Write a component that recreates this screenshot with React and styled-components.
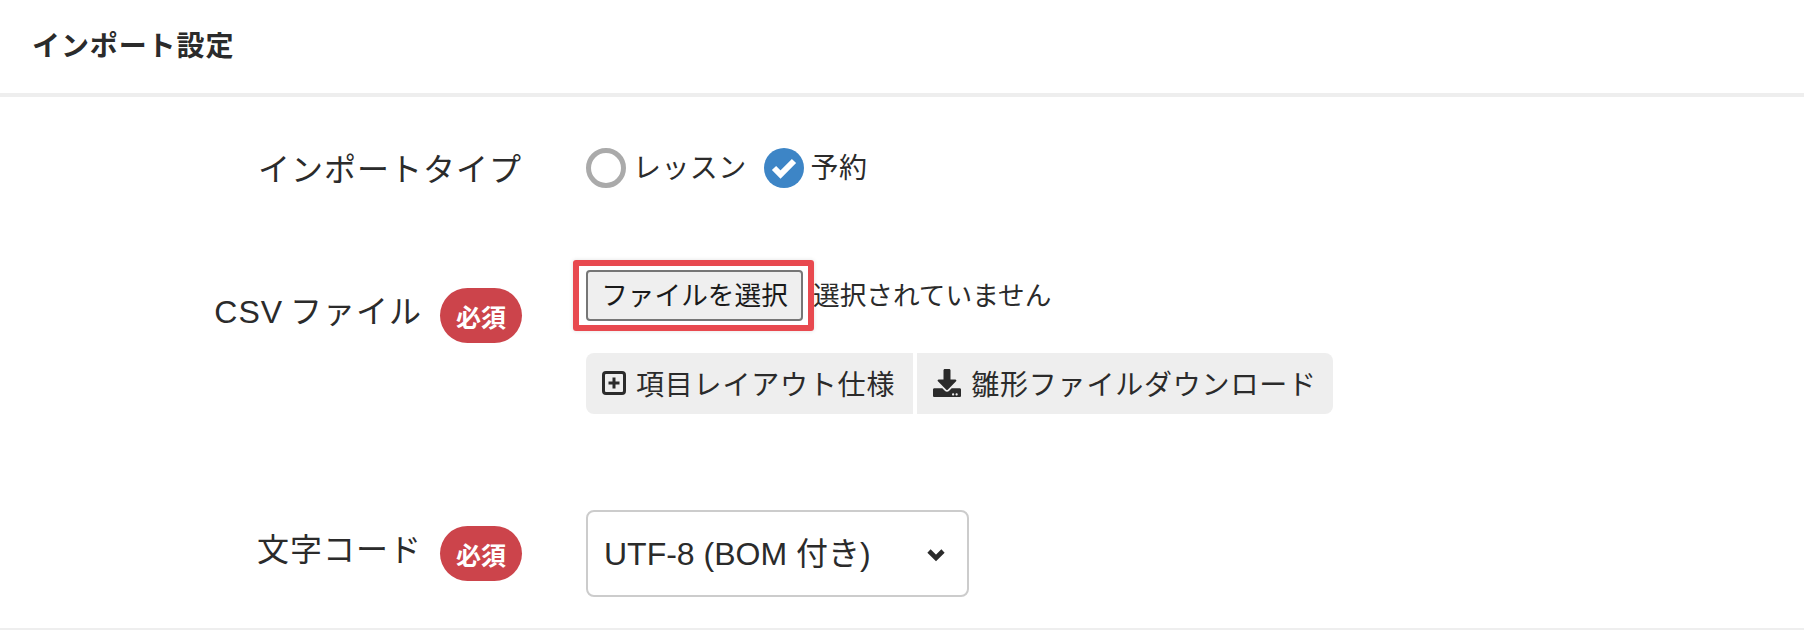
import React from "react";
import styled, { createGlobalStyle } from "styled-components";
import { FaDownload } from "react-icons/fa";

const GlobalStyle = createGlobalStyle`
  html, body {
    margin: 0;
    background: #fff;
    overflow: hidden;
  }
  body {
    font-family: "Liberation Sans", "Noto Sans CJK JP", sans-serif;
    color: #2b2b2b;
  }
`

const Page = styled.div`
  height: 630px;
  box-sizing: border-box;
  border-bottom: 2px solid #eee;
`

const SectionHeader = styled.h2`
  margin: 0;
  height: 97px;
  box-sizing: border-box;
  padding: 29px 0 0 32px;
  border-bottom: 4px solid #eee;
  font-size: 28px;
  line-height: 36px;
  font-weight: 700;
  letter-spacing: 0.9px;
`

const Form = styled.div`
  padding-top: 49px;
`

const Field = styled.div`
  display: grid;
  grid-template-columns: 522px 1fr;
  column-gap: 64px;
  align-items: ${(p) => p.$align || "center"};
  margin-bottom: ${(p) => p.$gap || 0}px;
`

const LabelCell = styled.div`
  display: flex;
  justify-content: flex-end;
  align-items: center;
  gap: 18px;
  padding-top: ${(p) => p.$top || 0}px;
`

const LabelText = styled.label`
  font-size: 32px;
  line-height: 40px;
  letter-spacing: 1px;
  word-spacing: -3px;
  padding: ${(p) => p.$pad || "0"};
`

const RequiredBadge = styled.span`
  width: 82px;
  height: 55px;
  display: flex;
  align-items: center;
  justify-content: center;
  border-radius: 28px;
  background: #cc444b;
  color: #fff;
  font-size: 25px;
  font-weight: 700;
`

const RadioGroup = styled.div`
  display: flex;
  align-items: center;
  height: 40px;
`

const RadioOption = styled.label`
  display: flex;
  align-items: center;
  gap: 7px;
  margin-right: 17px;
  font-size: 28px;
  letter-spacing: 0.4px;
`

const RadioText = styled.span`
  margin-bottom: 5px;
`

const RadioMark = styled.span`
  width: 40px;
  height: 40px;
  box-sizing: border-box;
  border-radius: 50%;
  display: flex;
  align-items: center;
  justify-content: center;
  border: ${(p) => (p.$checked ? "none" : "5px solid #aaa")};
  background: ${(p) => (p.$checked ? "#3d85c6" : "#fff")};
`

const FileRow = styled.div`
  position: relative;
  display: flex;
  align-items: center;
  width: fit-content;
  height: 51px;
  margin-bottom: 32px;
`

const FileButton = styled.button`
  width: 217px;
  height: 51px;
  box-sizing: border-box;
  padding: 0 0 4px;
  border: 2px solid #767676;
  border-radius: 4px;
  background: #efefef;
  color: #1a1a1a;
  font-family: inherit;
  font-size: 26.67px;
`

const FileName = styled.span`
  margin: 0 0 5px 10px;
  font-size: 26.67px;
`

/* annotation drawn over the file button */
const Highlight = styled.div`
  position: absolute;
  left: -13px;
  top: -10px;
  width: 241px;
  height: 71px;
  box-sizing: border-box;
  border: 6px solid #e8494f;
  border-radius: 3px;
  box-shadow: 0 0 4px rgba(0, 0, 0, 0.12);
  pointer-events: none;
`

const ButtonGroup = styled.div`
  display: flex;
  gap: 4px;
`

const GroupButton = styled.button`
  height: 61px;
  box-sizing: border-box;
  display: flex;
  align-items: center;
  gap: 10px;
  padding: 0 ${(p) => (p.$first ? 18 : 16)}px 2px 16px;
  border: none;
  background: #eee;
  color: #2b2b2b;
  font-family: inherit;
  font-size: 28px;
  letter-spacing: 0.8px;
  border-radius: ${(p) => (p.$first ? "8px 0 0 8px" : "0 8px 8px 0")};
  svg {
    flex: none;
  }
`

const SelectBox = styled.div`
  width: 383px;
  height: 87px;
  box-sizing: border-box;
  display: flex;
  align-items: center;
  justify-content: space-between;
  padding: 0 22px 6px 16px;
  border: 2px solid #ccc;
  border-radius: 8px;
  font-size: 32px;
  svg {
    margin-top: 8px;
  }
`

const CheckIcon = () => (
  <svg width="40" height="40" viewBox="0 0 40 40">
    <polyline points="10,20 16.5,26.5 30,13" fill="none" stroke="#fff" strokeWidth="6" />
  </svg>
)

const ChevronIcon = () => (
  <svg width="18" height="14" viewBox="0 0 18 14">
    <polyline points="2,3 9,10 16,3" fill="none" stroke="#2b2b2b" strokeWidth="4.6" />
  </svg>
)

const PlusBoxIcon = () => (
  <svg width="24" height="24" viewBox="0 0 24 24" fill="none" stroke="#2b2b2b" strokeWidth="3">
    <rect x="1.5" y="1.5" width="21" height="21" rx="2.5" />
    <path d="M12 6.5v11M6.5 12h11" />
  </svg>
)

export default function App() {
  return (
    <Page>
      <GlobalStyle />
      <SectionHeader>インポート設定</SectionHeader>
      <Form>
        <Field $gap={80}>
          <LabelCell>
            <LabelText $pad="4px 0 0">インポートタイプ</LabelText>
          </LabelCell>
          <RadioGroup>
            <RadioOption>
              <RadioMark />
              <RadioText>レッスン</RadioText>
            </RadioOption>
            <RadioOption>
              <RadioMark $checked>
                <CheckIcon />
              </RadioMark>
              <RadioText>予約</RadioText>
            </RadioOption>
          </RadioGroup>
        </Field>
        <Field $align="start" $gap={96}>
          <LabelCell $top={18}>
            <LabelText $pad="0 0 7px">CSV ファイル</LabelText>
            <RequiredBadge>必須</RequiredBadge>
          </LabelCell>
          <div>
            <FileRow>
              <FileButton>ファイルを選択</FileButton>
              <FileName>選択されていません</FileName>
              <Highlight />
            </FileRow>
            <ButtonGroup>
              <GroupButton $first>
                <PlusBoxIcon />
                項目レイアウト仕様
              </GroupButton>
              <GroupButton>
                <FaDownload size={28} />
                雛形ファイルダウンロード
              </GroupButton>
            </ButtonGroup>
          </div>
        </Field>
        <Field>
          <LabelCell>
            <LabelText $pad="0 0 7px">文字コード</LabelText>
            <RequiredBadge>必須</RequiredBadge>
          </LabelCell>
          <SelectBox>
            UTF-8 (BOM 付き)
            <ChevronIcon />
          </SelectBox>
        </Field>
      </Form>
    </Page>
  );
}
